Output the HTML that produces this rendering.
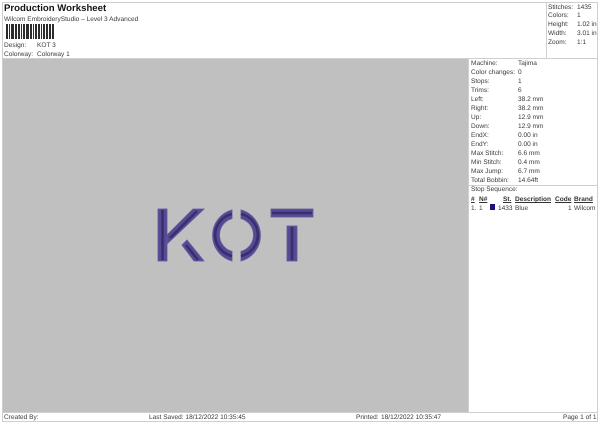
<!DOCTYPE html>
<html><head><meta charset="utf-8"><style>
html,body{margin:0;padding:0;background:#fff;}
body{width:600px;height:424px;position:relative;overflow:hidden;font-family:"Liberation Sans",sans-serif;font-size:6.55px;color:#3a3a3a;text-rendering:geometricPrecision;}
.t{position:absolute;white-space:nowrap;line-height:9px;}
.l{position:absolute;background:#cfcfcf;}
.b{font-weight:bold;text-decoration:underline;color:#333}
</style></head><body>
<div class="l" style="left:2px;top:2px;width:595px;height:1px"></div>
<div class="l" style="left:2px;top:2px;width:1px;height:420px"></div>
<div class="l" style="left:597px;top:2px;width:1px;height:420px"></div>
<div class="l" style="left:2px;top:421px;width:596px;height:1px"></div>
<div class="l" style="left:546px;top:2px;width:1px;height:57px"></div>
<div style="position:absolute;left:3px;top:59px;width:465px;height:353px;background:#c0c0c0"></div>
<div class="l" style="left:3px;top:58px;width:594px;height:1px"></div>
<div class="l" style="left:468px;top:59px;width:1px;height:354px"></div>
<div class="l" style="left:3px;top:412px;width:594px;height:1px"></div>
<div class="l" style="left:469px;top:185px;width:128px;height:1px"></div>

<div class="t" style="left:4px;top:2px;font-size:9.6px;line-height:13px;font-weight:bold;color:#151515">Production Worksheet</div>
<div class="t" style="left:4px;top:15px">Wilcom EmbroideryStudio – Level 3 Advanced</div>
<svg style="position:absolute;left:5px;top:24px" width="50" height="15"><g fill="#2c2c2c">
<rect x="1" width="2" height="15"/><rect x="4" width="1" height="15"/><rect x="6" width="3" height="15"/><rect x="10" width="2" height="15"/><rect x="13" width="2" height="15"/><rect x="16" width="1" height="15"/><rect x="18" width="2" height="15"/><rect x="21" width="3" height="15"/><rect x="25" width="2" height="15"/><rect x="28" width="1" height="15"/><rect x="30" width="2" height="15"/><rect x="33" width="2" height="15"/><rect x="36" width="1" height="15"/><rect x="38" width="2" height="15"/><rect x="41" width="2" height="15"/><rect x="44" width="2" height="15"/><rect x="47" width="2" height="15"/></g></svg>
<div class="t" style="left:4px;top:41px">Design:</div><div class="t" style="left:37px;top:41px">KOT 3</div>
<div class="t" style="left:4px;top:50px">Colorway:</div><div class="t" style="left:37px;top:50px">Colorway 1</div>

<div class="t" style="left:548px;top:3px">Stitches:</div><div class="t" style="left:577px;top:3px">1435</div>
<div class="t" style="left:548px;top:11px">Colors:</div><div class="t" style="left:577px;top:11px">1</div>
<div class="t" style="left:548px;top:20px">Height:</div><div class="t" style="left:577px;top:20px">1.02 in</div>
<div class="t" style="left:548px;top:29px">Width:</div><div class="t" style="left:577px;top:29px">3.01 in</div>
<div class="t" style="left:548px;top:38px">Zoom:</div><div class="t" style="left:577px;top:38px">1:1</div>

<div class="t" style="left:471px;top:59px">Machine:</div><div class="t" style="left:518px;top:59px">Tajima</div>
<div class="t" style="left:471px;top:68px">Color changes:</div><div class="t" style="left:518px;top:68px">0</div>
<div class="t" style="left:471px;top:77px">Stops:</div><div class="t" style="left:518px;top:77px">1</div>
<div class="t" style="left:471px;top:86px">Trims:</div><div class="t" style="left:518px;top:86px">6</div>
<div class="t" style="left:471px;top:95px">Left:</div><div class="t" style="left:518px;top:95px">38.2 mm</div>
<div class="t" style="left:471px;top:104px">Right:</div><div class="t" style="left:518px;top:104px">38.2 mm</div>
<div class="t" style="left:471px;top:113px">Up:</div><div class="t" style="left:518px;top:113px">12.9 mm</div>
<div class="t" style="left:471px;top:122px">Down:</div><div class="t" style="left:518px;top:122px">12.9 mm</div>
<div class="t" style="left:471px;top:131px">EndX:</div><div class="t" style="left:518px;top:131px">0.00 in</div>
<div class="t" style="left:471px;top:140px">EndY:</div><div class="t" style="left:518px;top:140px">0.00 in</div>
<div class="t" style="left:471px;top:149px">Max Stitch:</div><div class="t" style="left:518px;top:149px">6.6 mm</div>
<div class="t" style="left:471px;top:158px">Min Stitch:</div><div class="t" style="left:518px;top:158px">0.4 mm</div>
<div class="t" style="left:471px;top:167px">Max Jump:</div><div class="t" style="left:518px;top:167px">6.7 mm</div>
<div class="t" style="left:471px;top:176px">Total Bobbin:</div><div class="t" style="left:518px;top:176px">14.64ft</div>
<div class="t" style="left:471px;top:185px">Stop Sequence:</div>
<div class="t b" style="left:471px;top:195px">#</div>
<div class="t b" style="left:479px;top:195px">N#</div>
<div class="t b" style="left:503px;top:195px">St.</div>
<div class="t b" style="left:515px;top:195px">Description</div>
<div class="t b" style="left:555px;top:195px">Code</div>
<div class="t b" style="left:574px;top:195px">Brand</div>
<div class="t" style="left:471px;top:204px">1.</div><div class="t" style="left:479px;top:204px">1</div>
<div style="position:absolute;left:490px;top:204px;width:5px;height:6px;background:#1c1478"></div>
<div class="t" style="left:498px;top:204px">1433</div><div class="t" style="left:515px;top:204px">Blue</div>
<div class="t" style="left:568px;top:204px">1</div><div class="t" style="left:574px;top:204px">Wilcom</div>

<svg style="position:absolute;left:150px;top:200px" width="170" height="70" viewBox="0 0 170 70">
<defs><filter id="f" x="-5%" y="-5%" width="110%" height="110%"><feGaussianBlur stdDeviation="0.3"/></filter></defs>
<g fill="#574c93" stroke="#6258a0" stroke-width="0.8" filter="url(#f)">
<rect x="8" y="9" width="9" height="52"/>
<path d="M17 35 L43 9 L54 9 L17 44 Z"/>
<path d="M32 45 L37 40 L54 61 L44 61 Z"/>
<path d="M82 9.9 A26.5 26.5 0 0 0 82 61 L82 51.4 A17 17 0 0 1 82 18.6 Z"/>
<path d="M91 9.9 A26.5 26.5 0 0 1 91 61 L91 51.4 A17 17 0 0 0 91 18.6 Z"/>
<rect x="121" y="9" width="42" height="8"/>
<rect x="137" y="26" width="10" height="35"/>
</g>
<g fill="none" stroke="#372d70" stroke-width="2.6" filter="url(#f)">
<path d="M12.5 10 V60"/>
<path d="M20 38 L47 11"/>
<path d="M36 45 L48 60"/>
<path d="M82 14 A21.5 21.5 0 0 0 82 56"/>
<path d="M91 14 A21.5 21.5 0 0 1 91 56"/>
<path d="M122 13 H162"/>
<path d="M142 27 V60"/>
</g></svg>

<div class="t" style="left:4px;top:413px">Created By:</div>
<div class="t" style="left:149px;top:413px">Last Saved:</div><div class="t" style="left:185.5px;top:413px">18/12/2022 10:35:45</div>
<div class="t" style="left:356px;top:413px">Printed:</div><div class="t" style="left:381px;top:413px">18/12/2022 10:35:47</div>
<div class="t" style="left:563px;top:413px">Page 1 of 1</div>
</body></html>
